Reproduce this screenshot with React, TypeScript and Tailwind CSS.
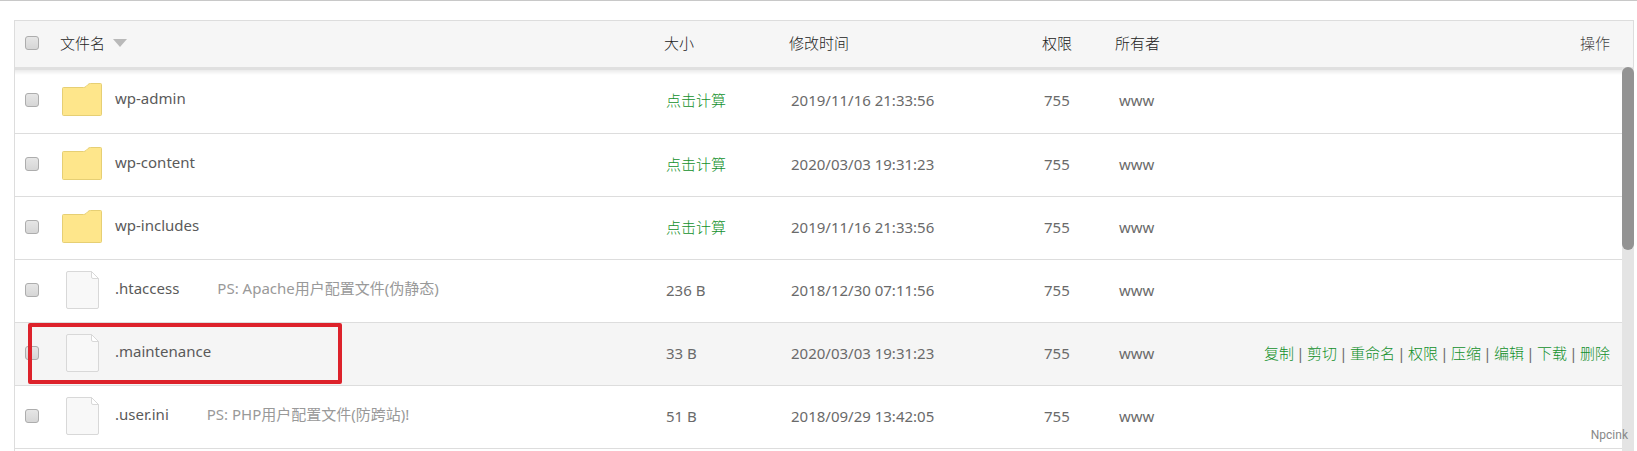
import { useState } from 'react'

const files = [
  { name: 'wp-admin', dir: true, size: '', time: '2019/11/16 21:33:56' },
  { name: 'wp-content', dir: true, size: '', time: '2020/03/03 19:31:23' },
  { name: 'wp-includes', dir: true, size: '', time: '2019/11/16 21:33:56' },
  { name: '.htaccess', ps: 'PS: Apache用户配置文件(伪静态)', size: '236 B', time: '2018/12/30 07:11:56' },
  { name: '.maintenance', size: '33 B', time: '2020/03/03 19:31:23', active: true },
  { name: '.user.ini', ps: 'PS: PHP用户配置文件(防跨站)!', size: '51 B', time: '2018/09/29 13:42:05' },
]

const actions = ['复制', '剪切', '重命名', '权限', '压缩', '编辑', '下载', '删除']

function Check({ label }: { label: string }) {
  const [on, setOn] = useState(false)
  return (
    <input
      type="checkbox"
      aria-label={label}
      checked={on}
      onChange={() => setOn(!on)}
      className="block size-3.5 appearance-none rounded-[3px] border border-[#adadad] bg-linear-to-b from-[#e6e6e6] to-[#d6d6d6] checked:bg-[#20a53a]"
    />
  )
}

function FolderIcon() {
  return (
    <svg width="42" height="36" viewBox="0 0 42 36" fill="none">
      <path
        d="M2.500 5.500H22.500Q24 5.500 25 4.500L27 2.500Q28 1.500 29.500 1.500H39.500Q40.500 1.500 40.500 2.500V32.500Q40.500 33.500 39.500 33.500H2.500Q1.500 33.500 1.500 32.500V6.500Q1.500 5.500 2.500 5.500Z"
        fill="#fee68b"
        stroke="#e6cf74"
      />
    </svg>
  )
}

function FileIcon() {
  return (
    <svg width="42" height="40" viewBox="0 0 42 40" fill="none" stroke="#d8d8d8">
      <path d="M7 1.500H30.500L37.500 8.500V37Q37.500 38.500 36 38.500H7Q5.500 38.500 5.500 37V3Q5.500 1.500 7 1.500Z" fill="#f8f8f8" />
      <path d="M30.500 1.500V7Q30.500 8.500 32 8.500H37.500Z" fill="#fff" />
    </svg>
  )
}

function Columns() {
  return (
    <colgroup>
      <col className="w-[45px]" />
      <col />
      <col className="w-[125px]" />
      <col className="w-[253px]" />
      <col className="w-[73px]" />
      <col className="w-[130px]" />
      <col className="w-[377px]" />
    </colgroup>
  )
}

export default function App() {
  return (
    <div className="border-t border-[#c8c8c8] bg-white pt-[19px] pr-[3px] pl-3.5 font-['Noto_Sans','Noto_Sans_CJK_SC',sans-serif] text-[15px] leading-5 text-[#6a6a6a]">
      <div className="relative border-l border-[#ddd]">
        {/* Header */}
        <div className="border-t border-r border-[#ddd] bg-[#f6f6f6] pr-[11px]">
          <table className="w-full table-fixed">
            <Columns />
            <thead>
              <tr className="h-[46px] text-left text-[#222] *:pb-0.5 *:font-light">
                <th className="pl-2.5"><Check label="全选" /></th>
                <th>
                  <button className="flex items-center gap-2">
                    文件名
                    <svg width="14" height="8" viewBox="0 0 14 8" fill="#b9b9b9"><path d="M0 0H14L7 8Z" /></svg>
                  </button>
                </th>
                <th>大小</th>
                <th>修改时间</th>
                <th>权限</th>
                <th>所有者</th>
                <th className="pr-3 text-right text-[#444]">操作</th>
              </tr>
            </thead>
          </table>
        </div>

        {/* File list */}
        <div className="flex">
          <div className="min-w-0 flex-1 border-t-3 border-[#e0e0e0] bg-[linear-gradient(#ebebeb,#fff_5px)] pb-0.5">
            <table className="w-full table-fixed">
              <Columns />
              <tbody>
                {files.map((f) => (
                  <tr
                    key={f.name}
                    className={`relative h-[63px] border-b border-[#ddd] *:pb-0.5 ${f.active ? 'bg-[#f5f5f5]' : ''}`}
                  >
                    <td className="pl-2.5"><Check label={f.name} /></td>
                    <td className="pl-px">
                      <div className="flex items-center">
                        {f.dir ? <FolderIcon /> : <FileIcon />}
                        <span className="ml-3 pb-1 text-[#5a5a5a]">{f.name}</span>
                        {f.ps && <span className="ml-[38px] pb-1 text-[#999]">{f.ps}</span>}
                      </div>
                      {f.active && (
                        <div className="absolute top-px left-[13px] h-[61px] w-[314px] rounded-xs border-4 border-[#dd222b]" />
                      )}
                    </td>
                    <td className="pl-0.5">
                      {f.dir ? <a href="#" className="font-light text-[#12902b]">点击计算</a> : f.size}
                    </td>
                    <td className="pl-0.5">{f.time}</td>
                    <td className="pl-0.5">755</td>
                    <td className="pl-1">www</td>
                    <td className="pr-3">
                      {f.active && (
                        <div className="flex justify-end">
                          {actions.map((a, i) => (
                            <span key={a} className="flex">
                              {i > 0 && <span className="w-[13px] text-center">|</span>}
                              <a href="#" className="font-light text-[#12902b]">{a}</a>
                            </span>
                          ))}
                        </div>
                      )}
                    </td>
                  </tr>
                ))}
              </tbody>
            </table>
          </div>
          <div className="w-3 bg-[#e4e4e4]">
            <div className="h-[183px] rounded-full bg-[#939393]" />
          </div>
        </div>

        {/* Watermark */}
        <span className="absolute right-1.5 bottom-1.5 font-[Roboto,sans-serif] text-[12px] text-[#888]">Npcink</span>
      </div>
    </div>
  )
}
